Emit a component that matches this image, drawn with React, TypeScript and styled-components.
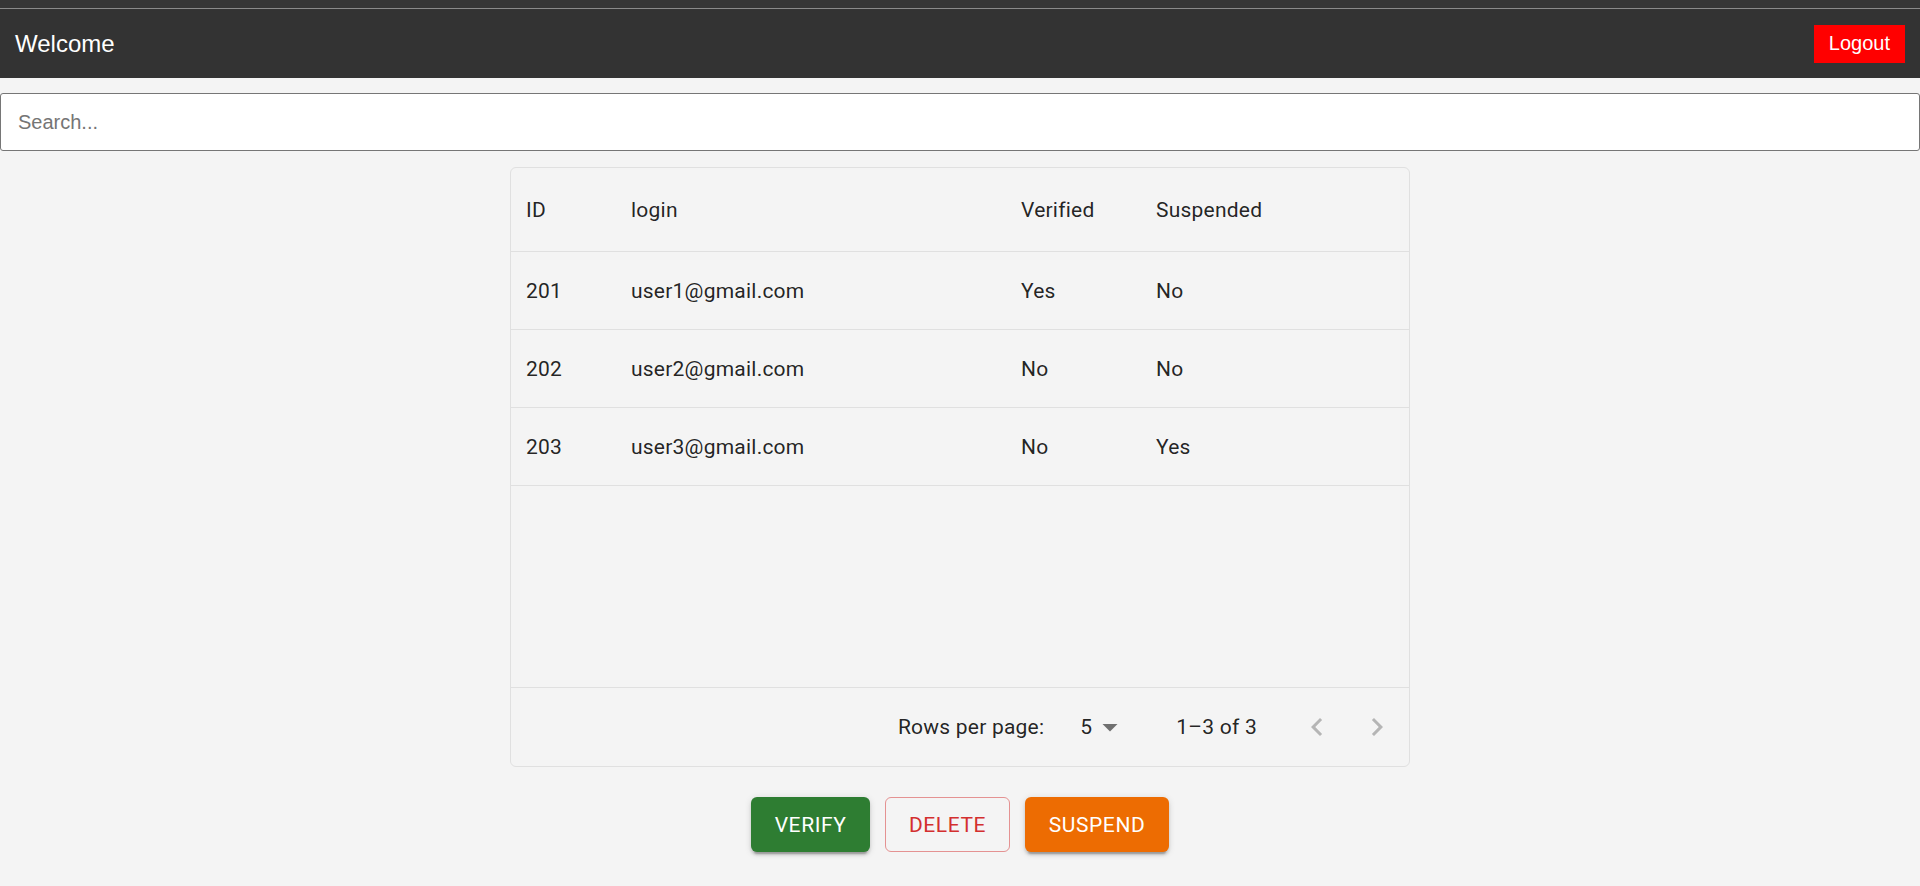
import React from "react";
import styled, { createGlobalStyle } from "styled-components";

const GlobalStyle = createGlobalStyle`
  html, body { margin: 0; padding: 0; background: #f4f4f4; }
  body { font-family: Roboto, "Liberation Sans", Arial, sans-serif; }
  * { box-sizing: border-box; }
`;

const Page = styled.div`
  display: flex;
  flex-direction: column;
  min-height: 886px;
  background: #f4f4f4;
`;

const TopStrip = styled.div`
  height: 9px;
  background: #363636;
  border-bottom: 1px solid #8a8a8a;
`;

const Header = styled.header`
  height: 69px;
  background: #333333;
  display: flex;
  align-items: center;
  justify-content: space-between;
  padding: 0 15px;
`;

const Title = styled.div`
  font-family: "Liberation Sans", Arial, sans-serif;
  font-size: 24px;
  color: #ffffff;
`;

const LogoutButton = styled.button`
  font-family: "Liberation Sans", Arial, sans-serif;
  font-size: 20px;
  color: #ffffff;
  background: #ff0000;
  border: none;
  border-radius: 0;
  height: 38px;
  padding: 0 15px;
  cursor: pointer;
`;

const SearchInput = styled.input`
  display: block;
  margin-top: 15px;
  width: 100%;
  height: 58px;
  border: 1px solid #767676;
  border-radius: 3px;
  background: #ffffff;
  padding: 0 17px;
  font-family: "Liberation Sans", Arial, sans-serif;
  font-size: 20px;
  color: #222;
  outline: none;
  &::placeholder { color: #757575; }
`;

const Card = styled.div`
  width: 900px;
  height: 600px;
  margin: 16px auto 0;
  border: 1px solid #e0e0e0;
  border-radius: 6px;
  background: #f4f4f4;
  display: flex;
  flex-direction: column;
  overflow: hidden;
`;

const GridRow = styled.div<{ $height: number }>`
  display: grid;
  grid-template-columns: 105px 390px 135px 1fr;
  height: ${(p) => p.$height}px;
  border-bottom: 1px solid #e0e0e0;
  align-items: center;
`;

const Cell = styled.div`
  padding: 0 15px;
  font-family: Roboto, "Liberation Sans", sans-serif;
  font-size: 21px;
  font-weight: 400;
  letter-spacing: 0.01071em;
  color: rgba(0, 0, 0, 0.87);
  white-space: nowrap;
  overflow: hidden;
`;

const Filler = styled.div`
  flex: 1;
`;

const Footer = styled.div`
  height: 79px;
  border-top: 1px solid #e0e0e0;
  display: flex;
  align-items: center;
  justify-content: flex-end;
  padding-right: 2px;
  font-family: Roboto, "Liberation Sans", sans-serif;
  font-size: 21px;
  letter-spacing: 0.01071em;
  color: rgba(0, 0, 0, 0.87);
`;

const FooterLabel = styled.span`
  margin-right: 36px;
`;

const SelectBox = styled.div`
  display: flex;
  align-items: center;
  gap: 4px;
  margin-right: 48px;
`;

const Displayed = styled.span`
  margin-right: 30px;
`;

const IconBtn = styled.button`
  width: 60px;
  height: 60px;
  border: none;
  background: transparent;
  padding: 0;
  display: flex;
  align-items: center;
  justify-content: center;
  color: rgba(0, 0, 0, 0.26);
`;

const Actions = styled.div`
  display: flex;
  justify-content: center;
  gap: 15px;
  margin-top: 30px;
`;

const ActionButton = styled.button<{ $color: string; $outlined?: boolean }>`
  height: 55px;
  padding: ${(p) => (p.$outlined ? "0 22.5px" : "0 24px")};
  border-radius: 6px;
  font-family: Roboto, "Liberation Sans", sans-serif;
  font-weight: 400;
  font-size: 21px;
  letter-spacing: 0.02857em;
  text-transform: uppercase;
  cursor: pointer;
  ${(p) =>
    p.$outlined
      ? `
    background: transparent;
    color: ${p.$color};
    border: 1.5px solid rgba(211, 47, 47, 0.5);
  `
      : `
    background: ${p.$color};
    color: #ffffff;
    border: none;
    box-shadow: 0px 4.5px 1.5px -3px rgba(0,0,0,0.2), 0px 3px 3px 0px rgba(0,0,0,0.14), 0px 1.5px 7.5px 0px rgba(0,0,0,0.12);
  `}
`;

const rows = [
  { id: 201, login: "user1@gmail.com", verified: "Yes", suspended: "No" },
  { id: 202, login: "user2@gmail.com", verified: "No", suspended: "No" },
  { id: 203, login: "user3@gmail.com", verified: "No", suspended: "Yes" },
];

export default function App() {
  return (
    <Page>
      <GlobalStyle />
      <TopStrip />
      <Header>
        <Title>Welcome</Title>
        <LogoutButton>Logout</LogoutButton>
      </Header>
      <SearchInput placeholder="Search..." />
      <Card>
        <GridRow $height={84}>
          <Cell>ID</Cell>
          <Cell>login</Cell>
          <Cell>Verified</Cell>
          <Cell>Suspended</Cell>
        </GridRow>
        {rows.map((r) => (
          <GridRow key={r.id} $height={78}>
            <Cell>{r.id}</Cell>
            <Cell>{r.login}</Cell>
            <Cell>{r.verified}</Cell>
            <Cell>{r.suspended}</Cell>
          </GridRow>
        ))}
        <Filler />
        <Footer>
          <FooterLabel>Rows per page:</FooterLabel>
          <SelectBox>
            <span>5</span>
            <svg width="36" height="36" viewBox="0 0 24 24" style={{ marginLeft: -4 }}>
              <path d="M7 10l5 5 5-5z" fill="rgba(0,0,0,0.54)" />
            </svg>
          </SelectBox>
          <Displayed>1–3 of 3</Displayed>
          <IconBtn aria-label="previous page">
            <svg width="36" height="36" viewBox="0 0 24 24">
              <path d="M15.41 7.41 14 6l-6 6 6 6 1.41-1.41L10.83 12z" fill="currentColor" />
            </svg>
          </IconBtn>
          <IconBtn aria-label="next page">
            <svg width="36" height="36" viewBox="0 0 24 24">
              <path d="M10 6 8.59 7.41 13.17 12l-4.58 4.59L10 18l6-6z" fill="currentColor" />
            </svg>
          </IconBtn>
        </Footer>
      </Card>
      <Actions>
        <ActionButton $color="#2e7d32">Verify</ActionButton>
        <ActionButton $color="#d32f2f" $outlined>Delete</ActionButton>
        <ActionButton $color="#ed6c02">Suspend</ActionButton>
      </Actions>
    </Page>
  );
}
